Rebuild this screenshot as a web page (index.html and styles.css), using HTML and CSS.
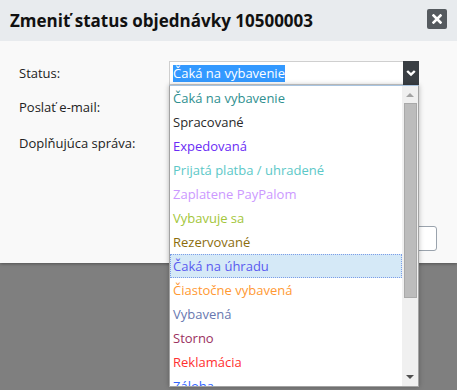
FILE: index.html
```html
<!DOCTYPE html>
<html lang="sk">
<head>
<meta charset="utf-8">
<title>Zmeniť status objednávky</title>
<link rel="stylesheet" href="styles.css">
</head>
<body>
<div class="dialog">
  <div class="header">
    <h1 class="title">Zmeniť status objednávky 10500003</h1>
    <span class="close"><svg width="10" height="10" viewBox="0 0 10 10"><path d="M1.5 1.5 L8.5 8.5 M8.5 1.5 L1.5 8.5" stroke="#fff" stroke-width="2.6" stroke-linecap="square"/></svg></span>
  </div>
  <div class="content">
    <div class="row">
      <span class="label">Status:</span>
      <div class="select">
        <span class="value"><span class="sel-text">Čaká na vybavenie</span></span>
        <span class="arrow"><svg width="10" height="8" viewBox="0 0 10 8"><path d="M1.2 2 L5 5.6 L8.8 2" fill="none" stroke="#fff" stroke-width="2.4"/></svg></span>
        <div class="dropdown">
          <ul class="options">
            <li class="c1">Čaká na vybavenie</li>
            <li class="c2">Spracované</li>
            <li class="c3">Expedovaná</li>
            <li class="c4">Prijatá platba / uhradené</li>
            <li class="c5">Zaplatene PayPalom</li>
            <li class="c6">Vybavuje sa</li>
            <li class="c7">Rezervované</li>
            <li class="c8 hover">Čaká na úhradu</li>
            <li class="c9">Čiastočne vybavená</li>
            <li class="c10">Vybavená</li>
            <li class="c11">Storno</li>
            <li class="c12">Reklamácia</li>
            <li class="c13">Záloha</li>
          </ul>
          <div class="scrollbar">
            <span class="up"></span>
            <span class="thumb"></span>
            <span class="down"></span>
          </div>
        </div>
      </div>
    </div>
    <div class="row row2"><span class="label">Poslať e-mail:</span></div>
    <div class="row row3"><span class="label">Doplňujúca správa:</span></div>
    <div class="actions"><span class="btn"></span></div>
  </div>
</div>
</body>
</html>
```

FILE: styles.css
```css
html, body {
  margin: 0;
  padding: 0;
}
body {
  background: #7f7f7f;
  font-family: "Open Sans", "Noto Sans", sans-serif;
  width: 457px;
  height: 390px;
  overflow: hidden;
}
.dialog {
  background: #f9f9f9;
  box-shadow: 0 1px 3px rgba(0,0,0,0.35);
}
.header {
  height: 41px;
  background: #e8ebee;
  display: flex;
  align-items: center;
  justify-content: space-between;
  padding: 0 10px;
}
.title {
  margin: 0;
  font-size: 17px;
  font-weight: 700;
  color: #111;
  letter-spacing: 0;
}
.close {
  width: 20px;
  height: 20px;
  background: #555a5f;
  border-radius: 2px;
  display: flex;
  align-items: center;
  justify-content: center;
  margin-top: -3px;
}
.content {
  padding: 20px 20px 12px 19px;
  font-size: 13px;
  color: #222;
}
.row {
  display: flex;
  align-items: center;
  height: 24px;
}
.row2 { margin-top: 10px; }
.row3 { margin-top: 12px; }
.label {
  width: 150px;
  flex: none;
}
.select {
  position: relative;
  width: 250px;
  height: 24px;
  box-sizing: border-box;
  border: 1px solid #cfcfcf;
  background: #fff;
  display: flex;
}
.value {
  flex: 1;
  display: flex;
  align-items: center;
  padding-left: 3px;
}
.sel-text {
  background: #3399ff;
  color: #fff;
  line-height: 17px;
  height: 17px;
}
.arrow {
  width: 16px;
  margin: -1px -1px -1px 0;
  background: #393e43;
  display: flex;
  align-items: center;
  justify-content: center;
}
.dropdown {
  position: absolute;
  left: -1px;
  top: 23px;
  width: 250px;
  height: 302px;
  box-sizing: border-box;
  background: #fff;
  border: 1px solid #a3a3a3;
  border-top-color: #a8c4e0;
  box-shadow: 0 0 5px rgba(0,0,0,0.28);
  display: flex;
  overflow: hidden;
}
.options {
  list-style: none;
  margin: 0;
  padding: 0;
  flex: 1;
}
.options li {
  height: 24px;
  line-height: 24px;
  padding-left: 3px;
  box-sizing: border-box;
  white-space: nowrap;
}
.options li.hover {
  background: #d5e9f7;
  outline: 1px dotted #7c9de8;
  outline-offset: -1px;
}
.c1 { color: #2f8f8f; }
.c2 { color: #2a2a2a; }
.c3 { color: #6a2cf5; }
.c4 { color: #5cc8c8; }
.c5 { color: #cc99ff; }
.c6 { color: #a3c63a; }
.c7 { color: #8c6d0c; }
.c8 { color: #5a5af0; }
.c9 { color: #ff9933; }
.c10 { color: #6878b0; }
.c11 { color: #9b3060; }
.c12 { color: #ff3030; }
.c13 { color: #3366ff; }
.scrollbar {
  width: 16px;
  flex: none;
  background: #f0f0f0;
  display: flex;
  flex-direction: column;
  align-items: center;
}
.up, .down {
  width: 0;
  height: 0;
  border-left: 4px solid transparent;
  border-right: 4px solid transparent;
}
.up {
  margin-top: 7px;
  border-bottom: 4px solid #a3a3a3;
}
.thumb {
  margin-top: 6px;
  width: 11px;
  height: 193px;
  background: #bcbcbc;
  border: 1px solid #a9a9a9;
}
.down {
  margin-top: auto;
  margin-bottom: 7px;
  border-top: 4px solid #505050;
}
.actions {
  margin-top: 71px;
  display: flex;
  justify-content: flex-end;
}
.btn {
  width: 130px;
  height: 25px;
  box-sizing: border-box;
  background: #fff;
  border: 1px solid #9aa3ad;
  border-radius: 3px;
}
```
